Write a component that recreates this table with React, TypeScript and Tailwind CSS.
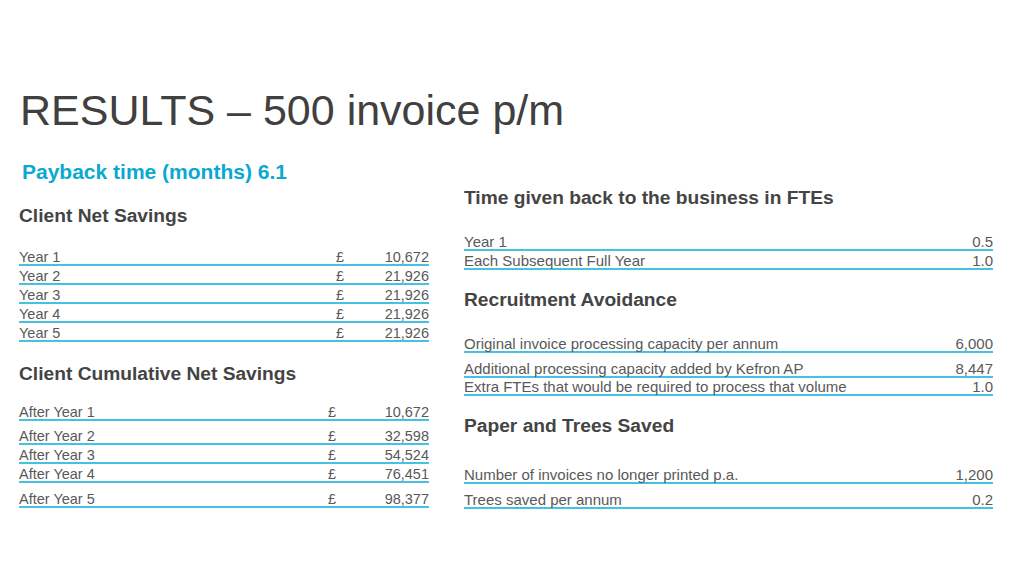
import React from "react";

type Row = {
  label: string;
  value: string;
  pt?: string;
};

const netSavings: Row[] = [
  { label: "Year 1", value: "10,672" },
  { label: "Year 2", value: "21,926" },
  { label: "Year 3", value: "21,926" },
  { label: "Year 4", value: "21,926" },
  { label: "Year 5", value: "21,926" },
];

// spacing between these rows is uneven in the slide, so each row carries its own top padding
const cumulative: Row[] = [
  { label: "After Year 1", value: "10,672" },
  { label: "After Year 2", value: "32,598", pt: "pt-[8px]" },
  { label: "After Year 3", value: "54,524" },
  { label: "After Year 4", value: "76,451" },
  { label: "After Year 5", value: "98,377", pt: "pt-[9px]" },
];

const ftes: Row[] = [
  { label: "Year 1", value: "0.5" },
  { label: "Each Subsequent Full Year", value: "1.0" },
];

const recruitment: Row[] = [
  { label: "Original invoice processing capacity per annum", value: "6,000" },
  { label: "Additional processing capacity added by Kefron AP", value: "8,447", pt: "pt-[9px]" },
  { label: "Extra FTEs that would be required to process that volume", value: "1.0", pt: "pt-[2px]" },
];

const paper: Row[] = [
  { label: "Number of invoices no longer printed p.a.", value: "1,200" },
  { label: "Trees saved per annum", value: "0.2", pt: "pt-[9px]" },
];

const MoneyRow = ({ row, wide }: { row: Row; wide?: boolean }) => (
  <div
    className={`flex items-end border-b-2 border-[#45c2e2] text-[14.5px] leading-[14px] text-[#595959] ${row.pt ?? "pt-[3px]"}`}
  >
    <span className="flex-1">{row.label}</span>
    <span className="w-[20px]">£</span>
    <span className={`${wide ? "w-[81px]" : "w-[73px]"} text-right`}>{row.value}</span>
  </div>
);

const StatRow = ({ row }: { row: Row }) => (
  <div
    className={`flex items-end justify-between border-b-2 border-[#45c2e2] text-[15px] leading-[14px] text-[#595959] ${row.pt ?? "pt-[3px]"}`}
  >
    <span>{row.label}</span>
    <span>{row.value}</span>
  </div>
);

const Heading = ({ children, className }: { children: React.ReactNode; className?: string }) => (
  <h2 className={`text-[19.2px] leading-[22px] font-bold text-[#444444] ${className ?? ""}`}>{children}</h2>
);

export default function App() {
  return (
    <div
      className="w-[1024px] h-[575px] bg-white overflow-hidden"
      style={{ fontFamily: '"Liberation Sans", Arial, sans-serif' }}
    >
      <h1 className="pt-[89px] pl-[20px] text-[43px] leading-[42px] text-[#404040]">
        RESULTS – 500 invoice p/m
      </h1>

      <div className="flex items-start">
        {/* left column */}
        <div className="ml-[19px] w-[410px] flex flex-col">
          <p className="mt-[29px] pl-[3px] text-[21px] leading-[24px] font-bold text-[#0aa9d0]">
            Payback time (months) 6.1
          </p>
          <Heading className="mt-[21px]">Client Net Savings</Heading>
          <div className="mt-[20px] flex flex-col">
            {netSavings.map((r) => (
              <MoneyRow key={r.label} row={r} />
            ))}
          </div>
          <Heading className="mt-[21px]">Client Cumulative Net Savings</Heading>
          <div className="mt-[17px] flex flex-col">
            {cumulative.map((r) => (
              <MoneyRow key={r.label} row={r} wide />
            ))}
          </div>
        </div>

        {/* right column */}
        <div className="ml-[35px] w-[529px] flex flex-col">
          <Heading className="mt-[56px]">Time given back to the business in FTEs</Heading>
          <div className="mt-[23px] flex flex-col">
            {ftes.map((r) => (
              <StatRow key={r.label} row={r} />
            ))}
          </div>
          <Heading className="mt-[19px]">Recruitment Avoidance</Heading>
          <div className="mt-[23px] flex flex-col">
            {recruitment.map((r) => (
              <StatRow key={r.label} row={r} />
            ))}
          </div>
          <Heading className="mt-[19px]">Paper and Trees Saved</Heading>
          <div className="mt-[28px] flex flex-col">
            {paper.map((r) => (
              <StatRow key={r.label} row={r} />
            ))}
          </div>
        </div>
      </div>
    </div>
  );
}
